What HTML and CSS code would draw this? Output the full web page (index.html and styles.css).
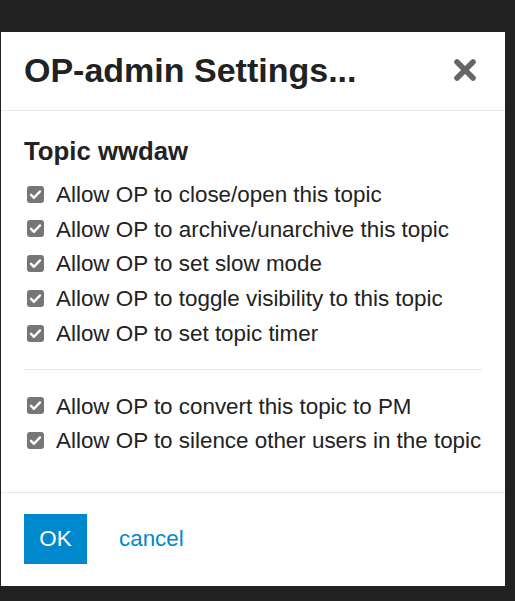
FILE: index.html
```html
<!DOCTYPE html>
<html lang="en">
<head>
<meta charset="utf-8">
<title>OP-admin Settings</title>
<link rel="stylesheet" href="styles.css">
</head>
<body>
<div class="modal">
  <div class="modal-header">
    <h1 class="modal-title">OP-admin Settings...</h1>
    <button class="close" aria-label="close">
      <svg width="24" height="24" viewBox="0 0 24 24"><path d="M4 4 L20 20 M20 4 L4 20" stroke="#666" stroke-width="5.6" stroke-linecap="round" fill="none"/></svg>
    </button>
  </div>
  <div class="modal-body">
    <h3 class="section-title">Topic wwdaw</h3>
    <label class="row"><span class="box"><svg width="17" height="17" viewBox="0 0 17 17"><path d="M4 8.8 L7 11.8 L13 5.4" stroke="#fff" stroke-width="2.4" fill="none" stroke-linecap="round" stroke-linejoin="round"/></svg></span>Allow OP to close/open this topic</label>
    <label class="row"><span class="box"><svg width="17" height="17" viewBox="0 0 17 17"><path d="M4 8.8 L7 11.8 L13 5.4" stroke="#fff" stroke-width="2.4" fill="none" stroke-linecap="round" stroke-linejoin="round"/></svg></span>Allow OP to archive/unarchive this topic</label>
    <label class="row"><span class="box"><svg width="17" height="17" viewBox="0 0 17 17"><path d="M4 8.8 L7 11.8 L13 5.4" stroke="#fff" stroke-width="2.4" fill="none" stroke-linecap="round" stroke-linejoin="round"/></svg></span>Allow OP to set slow mode</label>
    <label class="row"><span class="box"><svg width="17" height="17" viewBox="0 0 17 17"><path d="M4 8.8 L7 11.8 L13 5.4" stroke="#fff" stroke-width="2.4" fill="none" stroke-linecap="round" stroke-linejoin="round"/></svg></span>Allow OP to toggle visibility to this topic</label>
    <label class="row"><span class="box"><svg width="17" height="17" viewBox="0 0 17 17"><path d="M4 8.8 L7 11.8 L13 5.4" stroke="#fff" stroke-width="2.4" fill="none" stroke-linecap="round" stroke-linejoin="round"/></svg></span>Allow OP to set topic timer</label>
    <hr class="divider">
    <label class="row"><span class="box"><svg width="17" height="17" viewBox="0 0 17 17"><path d="M4 8.8 L7 11.8 L13 5.4" stroke="#fff" stroke-width="2.4" fill="none" stroke-linecap="round" stroke-linejoin="round"/></svg></span>Allow OP to convert this topic to PM</label>
    <label class="row"><span class="box"><svg width="17" height="17" viewBox="0 0 17 17"><path d="M4 8.8 L7 11.8 L13 5.4" stroke="#fff" stroke-width="2.4" fill="none" stroke-linecap="round" stroke-linejoin="round"/></svg></span>Allow OP to silence other users in the topic</label>
  </div>
  <div class="modal-footer">
    <button class="btn-primary">OK</button>
    <a class="cancel" href="#">cancel</a>
  </div>
</div>
</body>
</html>
```
FILE: styles.css
```css
html, body {
  margin: 0;
  padding: 0;
  background: #212121;
  font-family: "Liberation Sans", Arial, sans-serif;
  color: #222;
}

.modal {
  margin: 32px 0 0 1px;
  width: 504px;
  background: #fff;
}

.modal-header {
  display: flex;
  align-items: center;
  justify-content: space-between;
  padding: 18px 28px 20px 23px;
  border-bottom: 1px solid #e9e9e9;
}

.modal-title {
  margin: 0;
  font-size: 34px;
  line-height: 40px;
  font-weight: bold;
  color: #222;
}

.close {
  border: 0;
  background: none;
  padding: 0;
  width: 24px;
  height: 24px;
  display: flex;
}

.modal-body {
  padding: 25px 23px 33px 23px;
}

.section-title {
  margin: 0 0 11px 0;
  font-size: 25.76px;
  line-height: 30.9px;
  font-weight: bold;
  color: #222;
}

.row {
  display: flex;
  align-items: center;
  font-size: 22.4px;
  line-height: 34.72px;
  white-space: nowrap;
}

.box {
  display: flex;
  width: 17px;
  height: 17px;
  margin: 0 12px 2px 3px;
  background: #767676;
  border-radius: 3px;
  flex: none;
}

.divider {
  border: 0;
  border-top: 1px solid #e9e9e9;
  margin: 17px 0 20px 0;
  height: 0;
}

.modal-footer {
  display: flex;
  align-items: center;
  gap: 32px;
  padding: 21px 23px 22px 23px;
  border-top: 1px solid #e9e9e9;
}

.btn-primary {
  border: 0;
  margin: 0;
  background: #0088cc;
  color: #fff;
  font-family: "Liberation Sans", Arial, sans-serif;
  font-size: 22.4px;
  line-height: 32px;
  padding: 9px 15px;
  height: 50px;
  width: 63px;
}

.cancel {
  color: #0088cc;
  font-size: 22.4px;
  text-decoration: none;
}
```
